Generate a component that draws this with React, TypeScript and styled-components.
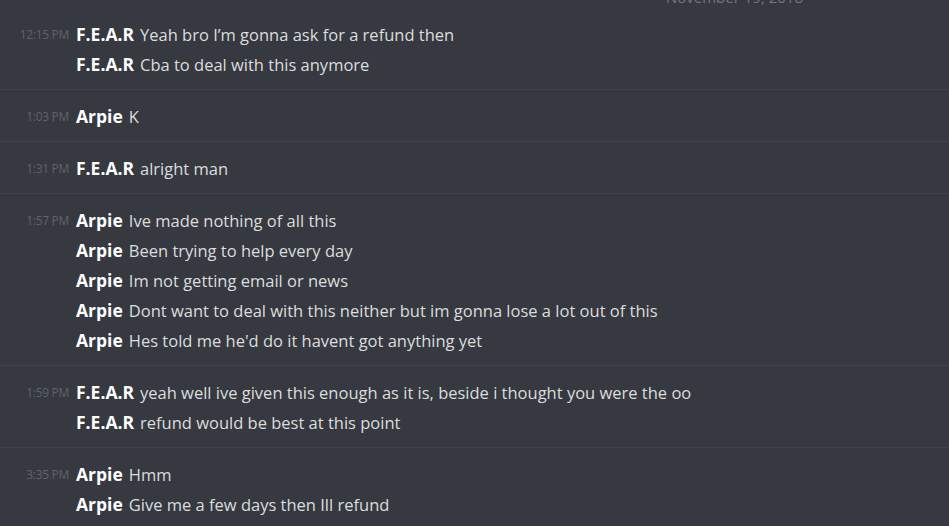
import React from "react";
import styled, { createGlobalStyle } from "styled-components";

const GlobalStyle = createGlobalStyle`
  html, body {
    margin: 0;
    padding: 0;
    background: #36393f;
    overflow: hidden;
  }
  body {
    font-family: "Open Sans", "Noto Sans", sans-serif;
  }
`;

type Line = { author: string; text: string };
type Group = { time: string; lines: Line[] };

const groups: Group[] = [
  {
    time: "12:15 PM",
    lines: [
      { author: "F.E.A.R", text: "Yeah bro I’m gonna ask for a refund then" },
      { author: "F.E.A.R", text: "Cba to deal with this anymore" },
    ],
  },
  { time: "1:03 PM", lines: [{ author: "Arpie", text: "K" }] },
  { time: "1:31 PM", lines: [{ author: "F.E.A.R", text: "alright man" }] },
  {
    time: "1:57 PM",
    lines: [
      { author: "Arpie", text: "Ive made nothing of all this" },
      { author: "Arpie", text: "Been trying to help every day" },
      { author: "Arpie", text: "Im not getting email or news" },
      { author: "Arpie", text: "Dont want to deal with this neither but im gonna lose a lot out of this" },
      { author: "Arpie", text: "Hes told me he'd do it havent got anything yet" },
    ],
  },
  {
    time: "1:59 PM",
    lines: [
      { author: "F.E.A.R", text: "yeah well ive given this enough as it is, beside i thought you were the oo" },
      { author: "F.E.A.R", text: "refund would be best at this point" },
    ],
  },
  {
    time: "3:35 PM",
    lines: [
      { author: "Arpie", text: "Hmm" },
      { author: "Arpie", text: "Give me a few days then Ill refund" },
    ],
  },
];

const App = () => {
  return (
    <>
      <GlobalStyle />
      <Chat>
        <DateDivider>
          <span>November 19, 2018</span>
        </DateDivider>
        {groups.map((g, gi) => (
          <MessageGroup key={gi} last={gi === groups.length - 1}>
            {g.lines.map((l, li) => (
              <Row key={li}>
                <Timestamp>{li === 0 ? g.time : ""}</Timestamp>
                <Author>{l.author}</Author>
                <Text>{l.text}</Text>
              </Row>
            ))}
          </MessageGroup>
        ))}
      </Chat>
    </>
  );
};

export default App;

const Chat = styled.div`
  width: 949px;
  height: 526px;
  overflow: hidden;
  background: #36393f;
  display: flex;
  flex-direction: column;
`;

const DateDivider = styled.div`
  height: 8px;
  flex-shrink: 0;
  overflow: visible;
  padding-left: 666px;
  span {
    display: block;
    margin-top: -13px;
    font-size: 15px;
    line-height: 20px;
    color: #72767d;
    white-space: nowrap;
  }
`;

const MessageGroup = styled.div<{ last?: boolean }>`
  flex-shrink: 0;
  padding: 11px 0 10px;
  border-bottom: ${(p) => (p.last ? "none" : "1px solid #40434a")};
  display: flex;
  flex-direction: column;
`;

const Row = styled.div`
  height: 30px;
  display: flex;
  align-items: center;
  white-space: nowrap;
`;

const Timestamp = styled.span`
  width: 69px;
  text-align: right;
  font-size: 12px;
  color: #5f636a;
  letter-spacing: -0.3px;
  flex-shrink: 0;
  margin-top: 1px;
`;

const Author = styled.span`
  margin-left: 7px;
  font-size: 17.5px;
  font-weight: 700;
  color: #ffffff;
`;

const Text = styled.span`
  margin-left: 6px;
  font-size: 16.5px;
  color: #dcddde;
`;
